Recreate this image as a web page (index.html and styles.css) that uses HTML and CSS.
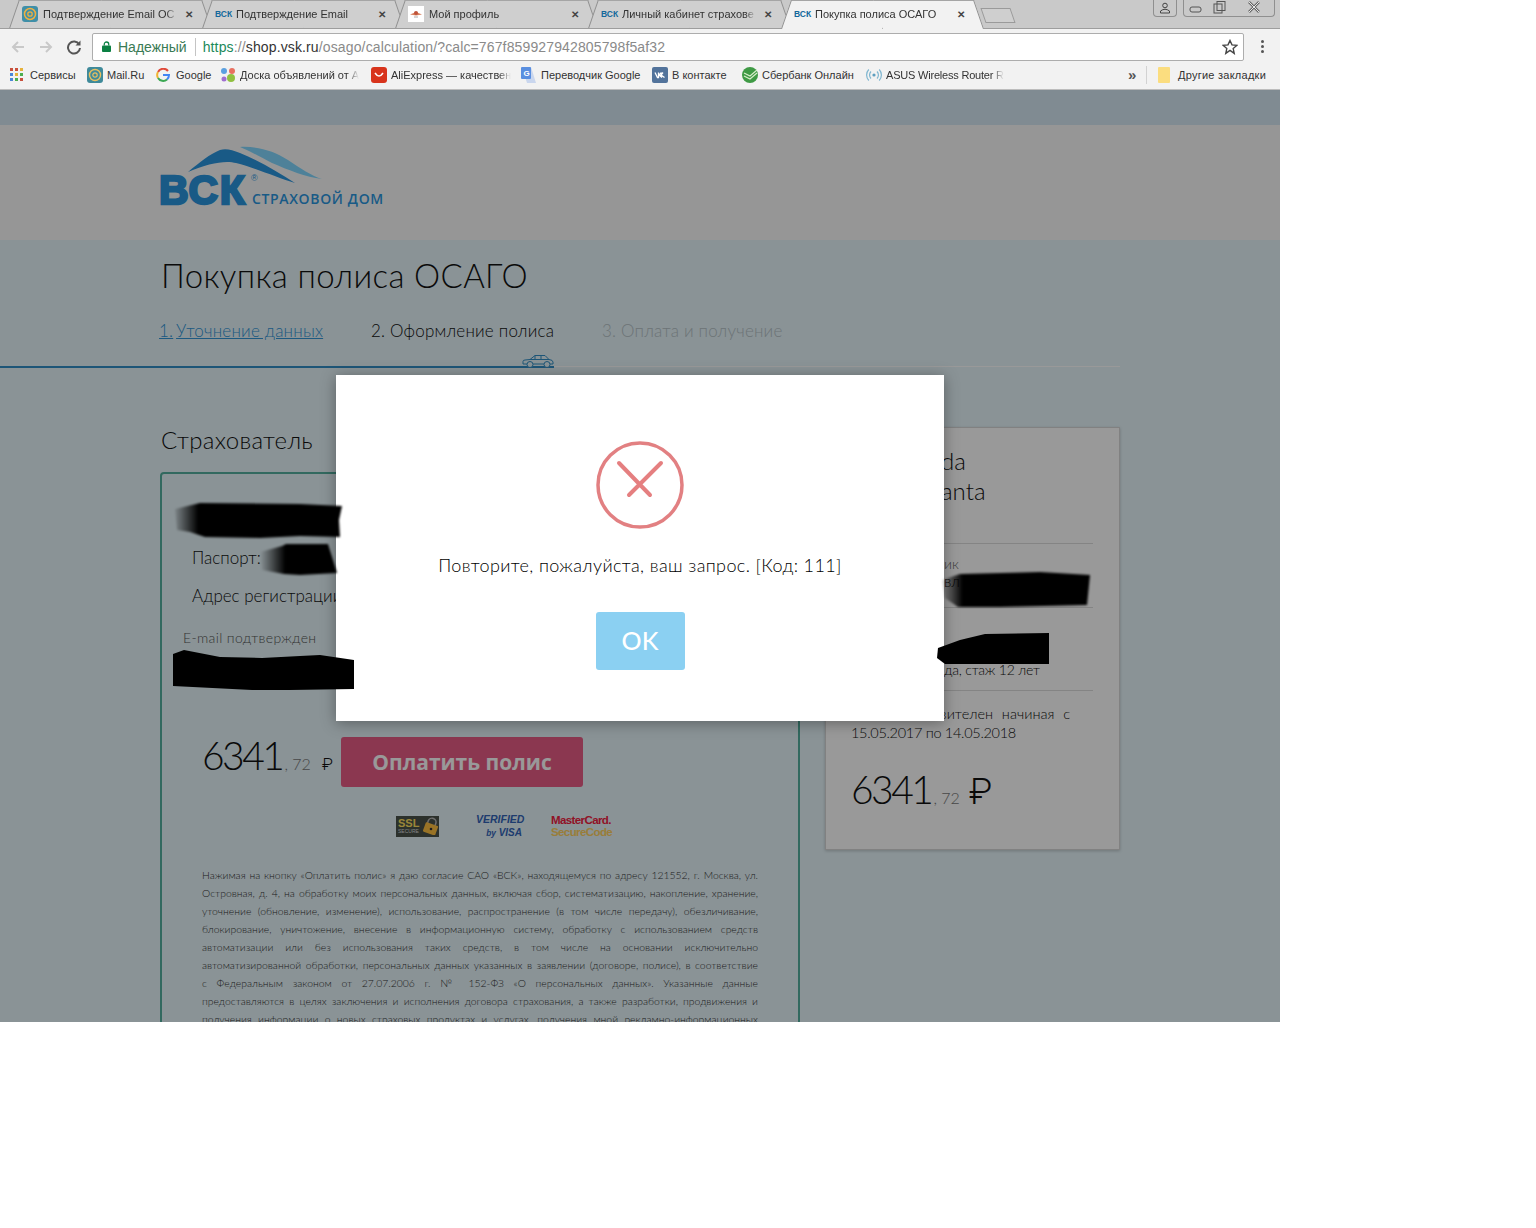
FILE: index.html
```html
<!DOCTYPE html>
<html lang="ru">
	<head>
		<meta charset="UTF-8" />
		<title>Покупка полиса ОСАГО</title>
		<link rel="stylesheet" href="styles.css">
	</head>
	<body>
		<div class="shot">
			<!-- вкладки -->
			<div class="tabbar">
				<div class="tab">
					<svg class="fav" viewBox="0 0 16 16"><rect width="16" height="16" rx="3" fill="#3f8fa8"/><circle cx="8" cy="8" r="5.5" fill="none" stroke="#f0b040" stroke-width="1.5"/><circle cx="8" cy="8" r="2.2" fill="none" stroke="#f0b040" stroke-width="1.3"/></svg>
					<span class="tab-title">Подтверждение Email ОС</span>
					<span class="tab-x">✕</span>
				</div>
				<div class="tab">
					<span class="fav-vsk">ВСК</span>
					<span class="tab-title">Подтверждение Email</span>
					<span class="tab-x">✕</span>
				</div>
				<div class="tab">
					<svg class="fav" viewBox="0 0 16 16"><rect width="16" height="16" fill="#fff"/><path d="M2 8.5 L8 6 L14 8.5 L8 9.5 Z" fill="#d8815f"/><circle cx="8" cy="7" r="2" fill="#c0533a"/><path d="M6 11h4" stroke="#aaa"/></svg>
					<span class="tab-title">Мой профиль</span>
					<span class="tab-x">✕</span>
				</div>
				<div class="tab">
					<span class="fav-vsk">ВСК</span>
					<span class="tab-title">Личный кабинет страхове</span>
					<span class="tab-x">✕</span>
				</div>
				<div class="tab active">
					<span class="fav-vsk">ВСК</span>
					<span class="tab-title">Покупка полиса ОСАГО</span>
					<span class="tab-x">✕</span>
				</div>
				<div class="new-tab"></div>
				<div class="win-btns">
					<div class="win-user">
						<svg viewBox="0 0 12 12" width="12" height="12"><circle cx="6" cy="3.5" r="2.3" fill="none" stroke="#444"/><path d="M1.5 11 V9 Q6 5.5 10.5 9 V11 Z" fill="none" stroke="#444"/></svg>
					</div>
					<div class="win-group">
						<svg viewBox="0 0 92 16" width="92" height="16">
							<rect x="7" y="7" width="11" height="5" rx="2" fill="none" stroke="#555"/>
							<rect x="31" y="4" width="8" height="9" fill="none" stroke="#555"/>
							<rect x="34" y="1.5" width="8" height="9" fill="none" stroke="#555"/>
							<path d="M66 2 L76 12 M76 2 L66 12" stroke="#666" stroke-width="2.5"/>
							<path d="M66 2 L76 12 M76 2 L66 12" stroke="#e6e6e6" stroke-width="1"/>
						</svg>
					</div>
				</div>
			</div>

			<!-- адресная строка -->
			<div class="toolbar">
				<svg class="nav-ico" viewBox="0 0 16 16"><path d="M14 8H3M8 3L3 8l5 5" fill="none" stroke="#c9c9c9" stroke-width="2"/></svg>
				<svg class="nav-ico" viewBox="0 0 16 16"><path d="M2 8h11M8 3l5 5-5 5" fill="none" stroke="#c9c9c9" stroke-width="2"/></svg>
				<svg class="nav-ico" viewBox="0 0 16 16"><path d="M13.2 5.5A6 6 0 1 0 14 9" fill="none" stroke="#555" stroke-width="2"/><path d="M14.5 1.5v5h-5z" fill="#555"/></svg>
				<div class="omnibox">
					<svg class="lock" viewBox="0 0 10 12"><path d="M2.5 5V3.5a2.5 2.5 0 0 1 5 0V5" fill="none" stroke="#0b8043" stroke-width="1.4"/><rect y="5" width="10" height="7" rx="1" fill="#0b8043"/></svg>
					<span class="secure">Надежный</span>
					<span class="omni-sep"></span>
					<span class="url"><span class="url-https">https</span><span class="url-rest">://</span><span class="url-host">shop.vsk.ru</span><span class="url-rest">/osago/calculation/?calc=767f859927942805798f5af32</span></span>
					<svg class="star" viewBox="0 0 16 16"><path d="M8 1.5l2 4.4 4.8.5-3.6 3.2 1 4.7L8 11.4l-4.2 2.9 1-4.7L1.2 6.4 6 5.900z" fill="none" stroke="#444" stroke-width="1.4"/></svg>
				</div>
				<div class="menu-dots"><i></i><i></i><i></i></div>
			</div>

			<!-- закладки -->
			<div class="bookmarks">
				<div class="bm bm-services">
					<svg class="bm-ico small" viewBox="0 0 14 14"><g fill="#c9503c"><rect width="3" height="3"/><rect x="5" width="3" height="3"/></g><rect x="10" width="3" height="3" fill="#e6b23a"/><rect y="5" width="3" height="3" fill="#4a86d8"/><rect x="5" y="5" width="3" height="3" fill="#e6b23a"/><rect x="10" y="5" width="3" height="3" fill="#4caf50"/><rect y="10" width="3" height="3" fill="#4a86d8"/><rect x="5" y="10" width="3" height="3" fill="#4caf50"/><rect x="10" y="10" width="3" height="3" fill="#c9503c"/></svg>
					<span>Сервисы</span>
				</div>
				<div class="bm bm-mail">
					<svg class="bm-ico" viewBox="0 0 16 16"><rect width="16" height="16" rx="3" fill="#3f8a9a"/><circle cx="8" cy="8" r="5.500" fill="none" stroke="#e8c060" stroke-width="1.4"/><circle cx="8" cy="8" r="2.200" fill="none" stroke="#e8c060" stroke-width="1.200"/></svg>
					<span>Mail.Ru</span>
				</div>
				<div class="bm bm-google">
					<svg class="bm-ico small" viewBox="0 0 14 14"><path d="M12 3A6 6 0 0 0 2 4" fill="none" stroke="#e04a3a" stroke-width="2"/><path d="M2 4a6 6 0 0 0 0 6" fill="none" stroke="#f0b430" stroke-width="2"/><path d="M2 10a6 6 0 0 0 9 1.500" fill="none" stroke="#3ca853" stroke-width="2"/><path d="M11 11.500A6 6 0 0 0 13 7H7" fill="none" stroke="#4285f4" stroke-width="2"/></svg>
					<span>Google</span>
				</div>
				<div class="bm bm-avito">
					<svg class="bm-ico" viewBox="0 0 16 16"><circle cx="4" cy="4" r="3" fill="#5aa0e0"/><circle cx="12" cy="4" r="3" fill="#e87060"/><circle cx="4" cy="12" r="2.500" fill="#a070d0"/><circle cx="11" cy="11" r="4" fill="#90c040"/></svg>
					<span class="bm-fade">Доска объявлений от А</span>
				</div>
				<div class="bm bm-ali">
					<svg class="bm-ico" viewBox="0 0 16 16"><rect width="16" height="16" rx="3" fill="#d8341c"/><path d="M4 6q4 6 8 0" fill="none" stroke="#fff" stroke-width="1.500"/></svg>
					<span class="bm-fade">AliExpress — качествен</span>
				</div>
				<div class="bm bm-translate">
					<svg class="bm-ico" viewBox="0 0 16 16"><path d="M1 0h9l5 16H6z" fill="#c9d6ee"/><rect width="10" height="12" rx="1" fill="#5a8fe0"/><text x="2.500" y="9" class="bm-g">G</text></svg>
					<span>Переводчик Google</span>
				</div>
				<div class="bm bm-vk">
					<svg class="bm-ico" viewBox="0 0 16 16"><rect width="16" height="16" rx="2" fill="#52739b"/><path d="M3 5.500l2.500 5h1V5.500M7 8l2.500-2.500M7 8l3 2.500M11 5.500L9 8l3.500 2.500" fill="none" stroke="#fff" stroke-width="1.300"/></svg>
					<span>В контакте</span>
				</div>
				<div class="bm bm-sber">
					<svg class="bm-ico" viewBox="0 0 16 16"><circle cx="8" cy="8" r="8" fill="#3f9a45"/><path d="M2 6l6 3 7-6M2 9l6 3 7-6" fill="none" stroke="#d8eecb" stroke-width="1.200"/></svg>
					<span>Сбербанк Онлайн</span>
				</div>
				<div class="bm bm-asus">
					<svg class="bm-ico" viewBox="0 0 16 16"><circle cx="8" cy="8" r="1.600" fill="#5f9fc0"/><path d="M5 4.500a5 5 0 0 0 0 7M11 4.500a5 5 0 0 1 0 7M2.800 2.500a8 8 0 0 0 0 11M13.200 2.500a8 8 0 0 1 0 11" fill="none" stroke="#7fb6d0" stroke-width="1.200"/></svg>
					<span class="bm-fade">ASUS Wireless Router R</span>
				</div>
				<div class="bm-more">»</div>
				<div class="bm-sep"></div>
				<div class="bm bm-other">
					<svg class="bm-ico" viewBox="0 0 12 16"><rect width="12" height="16" rx="1" fill="#fbdd7f"/></svg>
					<span>Другие закладки</span>
				</div>
			</div>

			<!-- страница -->
			<div class="viewport">
				<div class="top-band"></div>
				<div class="site-head">
					<svg class="logo" viewBox="0 0 224 60" width="224" height="60">
						<path d="M28 24 C40 14 50 6 60 2 C66 0 72 2 80 5 C100 13 118 24 135 35 C118 30 96 20 76 15 C66 12 48 15 28 24 Z" fill="#2b96e0"/>
						<path d="M80 -1 C98 -2 114 3 128 12 C140 20 152 28 162 31 C146 29 128 22 112 15 C100 9 90 3 80 -1 Z" fill="#82d8ff"/>
						<text x="-1" y="56" class="logo-big">ВСК</text>
						<text x="91" y="33" class="logo-reg">®</text>
						<text x="92" y="55.500" class="logo-small">СТРАХОВОЙ ДОМ</text>
					</svg>
				</div>
				<div class="content">
					<h1 class="page-title">Покупка полиса ОСАГО</h1>
					<div class="steps">
						<a class="step step-done"><span class="step-n">1.</span> <span class="step-name">Уточнение данных</span></a>
						<span class="step step-now">2. Оформление полиса</span>
						<span class="step step-next">3. Оплата и получение</span>
					</div>
					<div class="wizard-line">
						<div class="wizard-fill">
							<svg class="car" viewBox="0 0 32 14" width="32" height="14"><path d="M1 10 V7.500 Q1 6 3 6 L8 5.500 L13 1.500 H23 L27 5.500 Q31 6 31 8 V10 Z M13 1.500 V5.500 H8 M19 1.500 V5.500 H13 M19 5.500 H27" fill="none" stroke="#318ec6"/><circle cx="8" cy="10.500" r="3" fill="#e6f5fa" stroke="#318ec6"/><circle cx="25" cy="10.500" r="3" fill="#e6f5fa" stroke="#318ec6"/></svg>
						</div>
					</div>
					<div class="columns">
						<div class="insurer">
							<h2 class="sec-title">Страхователь</h2>
							<div class="insurer-card">
								<div class="person">
									<p class="person-row">Паспорт:</p>
									<p class="person-row">Адрес регистрации</p>
									<p class="email-label">E-mail подтвержден</p>
								</div>
								<div class="pay-row">
									<div class="price"><span class="price-main">6341</span><span class="price-cents">, 72</span><span class="price-cur">₽</span></div>
									<button class="pay-btn">Оплатить полис</button>
								</div>
								<div class="secure-logos">
									<div class="ssl"><span class="ssl-txt"><b>SSL</b><i>SECURE</i></span><svg viewBox="0 0 16 18" width="16" height="18"><path d="M4 8V5a4 4 0 0 1 8 0v3" fill="none" stroke="#bbb" stroke-width="1.500" transform="rotate(20 8 8)"/><rect x="1" y="7" width="13" height="10" rx="1" fill="#ffc040" transform="rotate(20 8 12)"/><circle cx="8" cy="12" r="1.300" fill="#333"/></svg></div>
									<div class="visa"><b>VERIFIED</b><b class="visa-by"><small>by</small> VISA</b></div>
									<div class="mc"><b>MasterCard.</b><b class="mc-sec">SecureCode</b></div>
								</div>
								<div class="legal">
									<span>Нажимая на кнопку «Оплатить полис» я даю согласие САО «ВСК», находящемуся по адресу 121552, г. Москва, ул.</span>
									<span>Островная, д. 4, на обработку моих персональных данных, включая сбор, систематизацию, накопление, хранение,</span>
									<span>уточнение (обновление, изменение), использование, распространение (в том числе передачу), обезличивание,</span>
									<span>блокирование, уничтожение, внесение в информационную систему, обработку с использованием средств</span>
									<span>автоматизации или без использования таких средств, в том числе на основании исключительно</span>
									<span>автоматизированной обработки, персональных данных указанных в заявлении (договоре, полисе), в соответствие</span>
									<span>с Федеральным законом от 27.07.2006 г. № 152-ФЗ «О персональных данных». Указанные данные</span>
									<span>предоставляются в целях заключения и исполнения договора страхования, а также разработки, продвижения и</span>
									<span>получения информации о новых страховых продуктах и услугах, получения мной рекламно-информационных</span>
								</div>
							</div>
						</div>
						<div class="summary">
							<p class="car-line">da</p>
							<p class="car-line">anta</p>
							<div class="sum-block sum-owner">
								<p class="sum-label tail">ик</p>
								<p class="sum-text tail">вл</p>
							</div>
							<div class="sum-block sum-driver">
								<p class="sum-text tail sum-stage">да, стаж 12 лет</p>
							</div>
							<div class="sum-period">
								<p class="sum-text sum-from">Полис действителен начиная с</p>
								<p class="sum-text sum-dates">15.05.2017 по 14.05.2018</p>
							</div>
							<div class="sum-price"><span class="price-main">6341</span><span class="price-cents">, 72</span><span class="sum-cur">₽</span></div>
						</div>
					</div>
				</div>

				<!-- затемнение и окно ошибки -->
				<div class="overlay">
					<div class="modal">
						<svg class="err-ico" viewBox="0 0 88 88" width="88" height="88"><circle cx="44" cy="44" r="42" fill="none" stroke="#e28082" stroke-width="3.500"/><path d="M23 22 L54 54 M65 22 L33 54" fill="none" stroke="#e57f80" stroke-width="4" stroke-linecap="round"/></svg>
						<p class="modal-msg">Повторите, пожалуйста, ваш запрос. [Код: 111]</p>
						<button class="ok-btn">OK</button>
					</div>
				</div>

				<!-- закрашенные данные -->
				<svg class="scribbles" viewBox="0 90 1280 932" width="1280" height="932">
					<defs>
						<filter id="soft"><feGaussianBlur stdDeviation="1.200"/></filter>
						<linearGradient id="fadeL"><stop offset="0" stop-color="#000" stop-opacity="0.1"/><stop offset="0.14" stop-color="#000"/></linearGradient>
						<linearGradient id="fadeB"><stop offset="0" stop-color="#000" stop-opacity="0"/><stop offset="0.33" stop-color="#000"/></linearGradient>
					</defs>
					<path d="M175 509 L200 503 L300 504 L342 506 L339 520 L340 537 L300 536 L260 538 L205 537 L190 532 L177 530 Z" fill="url(#fadeL)" filter="url(#soft)"/>
					<path d="M260 552 L282 546 L286 544 L328 544 L337 573 L300 575 L284 574 L262 570 Z" fill="url(#fadeB)" filter="url(#soft)"/>
					<path d="M173 654 L184 650 L220 657 L262 658 L300 656 L320 655 L354 660 L354 689 L290 690 L252 690 L173 686 Z" fill="#000"/>
					<path d="M942 580 L960 574 L1040 572 L1090 575 L1087 605 L1000 607 L958 607 L945 598 Z" fill="url(#fadeL)" filter="url(#soft)"/>
					<path d="M938 648 L960 640 L985 634 L1049 633 L1049 664 L945 664 L937 658 Z" fill="#000"/>
				</svg>
			</div>
		</div>
	</body>
</html>
```

FILE: styles.css
```css
* {
	margin: 0;
	padding: 0;
	box-sizing: border-box;
}

body {
	background: #fff;
	font-family: "Lato", "Open Sans", sans-serif;
}

.shot {
	width: 1280px;
	height: 1022px;
	overflow: hidden;
	display: flex;
	flex-direction: column;
}

/* браузер */
.tabbar {
	height: 29px;
	flex: none;
	display: flex;
	padding-left: 14px;
	background: #c9c9c9;
	border-bottom: 1px solid #9d9d9d;
	font-family: "Liberation Sans", sans-serif;
}

.tab {
	position: relative;
	width: 193px;
	height: 28px;
	flex: none;
	display: flex;
	align-items: center;
	padding: 0 10px 0 8px;
	font-size: 11px;
	color: #333;
}

.tab::before,
.tab::after {
	content: "";
	position: absolute;
	top: 0;
	bottom: 0;
	width: 52%;
	background: #cfcfcf;
	border-top: 1px solid #a5a5a5;
	z-index: 0;
}

.tab::before {
	left: 0;
	border-left: 1px solid #8f8f8f;
	transform: skewX(-19deg);
}

.tab::after {
	right: 0;
	border-right: 1px solid #8f8f8f;
	transform: skewX(19deg);
}

.tab.active {
	z-index: 2;
}

.tab.active::before,
.tab.active::after {
	bottom: -1px;
	background: #f2f2f2;
}

.tab > * {
	position: relative;
	z-index: 1;
}

.fav {
	width: 16px;
	height: 16px;
	flex: none;
}

.fav-vsk {
	width: 16px;
	flex: none;
	font-size: 8.500px;
	font-weight: bold;
	color: #14689c;
}

.tab-title {
	flex: 1;
	min-width: 0;
	margin-left: 5px;
	white-space: nowrap;
	mask-image: linear-gradient(to right, #000 92%, transparent);
}

.tab-x {
	width: 12px;
	flex: none;
	margin-left: 8px;
	font-size: 10px;
	font-weight: bold;
	color: #444;
}

.new-tab {
	width: 30px;
	height: 15px;
	margin: 8px 0 0 4px;
	border: 1px solid #9a9a9a;
	background: #cfcfcf;
	transform: skewX(19deg);
}

.win-btns {
	margin-left: auto;
	margin-right: 5px;
	display: flex;
	gap: 6px;
	align-items: flex-start;
}

.win-user {
	width: 24px;
	height: 17px;
	border: 1px solid #8f8f8f;
	border-top: 0;
	border-radius: 0 0 4px 4px;
	display: flex;
	align-items: center;
	justify-content: center;
}

.win-group {
	width: 92px;
	height: 17px;
	border: 1px solid #8f8f8f;
	border-top: 0;
	border-radius: 0 0 4px 4px;
}

.win-group svg {
	display: block;
	margin-left: -1px;
}

.toolbar {
	height: 33px;
	flex: none;
	display: flex;
	align-items: center;
	padding: 2px 0 0 10px;
	background: #f2f2f2;
	font-family: "Liberation Sans", sans-serif;
}

.nav-ico {
	width: 16px;
	height: 16px;
	margin-right: 12px;
	flex: none;
}

.omnibox {
	width: 1152px;
	height: 28px;
	margin-left: -2px;
	padding: 0 5px 0 9px;
	flex: none;
	display: flex;
	align-items: center;
	background: #fff;
	border: 1px solid #adadad;
	border-radius: 2px;
}

.lock {
	width: 9px;
	height: 11px;
	flex: none;
}

.secure {
	margin-left: 7px;
	font-size: 14px;
	color: #3a7a54;
}

.omni-sep {
	width: 1px;
	height: 18px;
	margin: 0 7px 0 8px;
	background: #c4c4c4;
}

.url {
	flex: 1;
	font-size: 14px;
	letter-spacing: 0.130px;
	white-space: nowrap;
}

.url-https {
	color: #1b8a5a;
}

.url-rest {
	color: #8a8a8a;
}

.url-host {
	color: #333;
}

.star {
	width: 16px;
	height: 16px;
	flex: none;
}

.menu-dots {
	display: flex;
	flex-direction: column;
	gap: 2px;
	margin-left: 17px;
}

.menu-dots i {
	width: 3px;
	height: 3px;
	background: #555;
	border-radius: 50%;
}

.bookmarks {
	height: 28px;
	flex: none;
	display: flex;
	align-items: center;
	padding: 0 0 2px 10px;
	background: #f2f2f2;
	border-bottom: 1px solid #bdbdbd;
	font-family: "Liberation Sans", sans-serif;
	font-size: 11px;
	color: #333;
}

.bm {
	display: flex;
	align-items: center;
	flex: none;
}

.bm-ico {
	width: 16px;
	height: 16px;
	margin-right: 4px;
	flex: none;
}

.bm-ico.small {
	width: 14px;
	height: 14px;
	margin-right: 6px;
}

.bm-g {
	font-size: 8px;
	font-weight: bold;
	fill: #fff;
}

.bm-fade {
	display: block;
	white-space: nowrap;
	mask-image: linear-gradient(to right, #000 90%, transparent);
}

.bm-services { width: 77px; }
.bm-mail { width: 69px; }
.bm-google { width: 64px; }
.bm-avito { width: 151px; }
.bm-ali { width: 150px; }
.bm-translate { width: 131px; }
.bm-vk { width: 90px; }
.bm-sber { width: 124px; }
.bm-asus { width: 262px; letter-spacing: -0.200px; }

.bm-more {
	width: 18px;
	font-size: 15px;
	font-weight: bold;
	color: #555;
	line-height: 1;
}

.bm-sep {
	width: 1px;
	height: 18px;
	margin: 0 11px 0 0;
	background: #d2d2d2;
}

.bm-other {
	letter-spacing: 0.250px;
}

.bm-other .bm-ico {
	width: 12px;
	margin-right: 8px;
}

/* страница */
.viewport {
	position: relative;
	flex: 1;
	min-height: 0;
	overflow: hidden;
	background: #e6f5fa;
}

.top-band {
	height: 35px;
	background: #d5e8f3;
}

.site-head {
	height: 115px;
	padding: 23px 0 0 160px;
	background: #fbfbfb;
}

.logo {
	display: block;
	overflow: visible;
}

.logo-big {
	font-family: "Liberation Sans", sans-serif;
	font-size: 41px;
	font-weight: bold;
	letter-spacing: 1.500px;
	fill: #2b96e0;
	stroke: #2b96e0;
	stroke-width: 2.500;
}

.logo-reg {
	font-family: "Liberation Sans", sans-serif;
	font-size: 9px;
	fill: #2b96e0;
}

.logo-small {
	font-family: "Open Sans", sans-serif;
	font-size: 14px;
	font-weight: 600;
	letter-spacing: 0.650px;
	fill: #2b96e0;
}

.content {
	padding-top: 14px;
	color: #111;
}

.page-title {
	margin-left: 161px;
	font-size: 33px;
	font-weight: 300;
	letter-spacing: 0.350px;
	line-height: 42px;
}

.steps {
	display: flex;
	margin: 24px 0 0 160px;
	font-size: 17px;
	font-weight: 300;
	letter-spacing: 0.200px;
	line-height: 22px;
}

.step-done {
	color: #3296d8;
	width: 211px;
}

.step-done span {
	text-decoration: underline;
}

.step-n {
	margin-left: -1px;
}

.step-name {
	margin-left: -2px;
}

.step-now {
	width: 231px;
}

.step-next {
	color: #b5c2c7;
}

.wizard-line {
	width: 1120px;
	height: 1px;
	margin-top: 24px;
	background: #fff;
}

.wizard-fill {
	position: relative;
	width: 554px;
	height: 2px;
	background: #318ec6;
}

.car {
	position: absolute;
	right: 0;
	bottom: 0;
}

.columns {
	display: flex;
	margin: 58px 0 0 160px;
}

.insurer {
	width: 640px;
	flex: none;
}

.sec-title {
	margin-left: 1px;
	font-size: 24px;
	font-weight: 300;
	letter-spacing: 0.300px;
	line-height: 30px;
}

.insurer-card {
	height: 600px;
	margin-top: 17px;
	border: 2px solid #54af9e;
	border-radius: 4px;
	padding: 73px 40px 0 40px;
}

.person-row {
	margin: 0 0 16px -10px;
	font-size: 17px;
	font-weight: 300;
	line-height: 22px;
}

.email-label {
	margin: 22px 0 0 -19px;
	font-size: 14px;
	font-weight: 300;
	letter-spacing: 0.350px;
	color: #555;
}

.pay-row {
	display: flex;
	align-items: flex-start;
	margin-top: 91px;
}

.price {
	width: 139px;
	margin-top: -5px;
	flex: none;
	white-space: nowrap;
}

.price-main {
	font-size: 39px;
	font-weight: 300;
	letter-spacing: -2.500px;
}

.price-cents {
	margin-left: 2px;
	font-size: 16px;
	font-weight: 300;
	color: #777;
}

.price-cur {
	margin-left: 11px;
	font-family: "Roboto", sans-serif;
	font-size: 17px;
	font-weight: 300;
}

.pay-btn {
	width: 242px;
	height: 50px;
	border: 0;
	border-radius: 3px;
	background: #e85c85;
	color: #fff;
	font-family: "Open Sans", sans-serif;
	font-size: 21px;
	font-weight: 700;
}

.secure-logos {
	display: flex;
	align-items: center;
	margin: 25px 0 0 194px;
	height: 28px;
}

.ssl {
	position: relative;
	width: 43px;
	height: 21px;
	flex: none;
	display: flex;
	align-items: center;
	justify-content: space-between;
	background: #4a524a;
	color: #ffe060;
	font-family: "Liberation Sans", sans-serif;
	line-height: 1;
}

.ssl-txt {
	display: flex;
	flex-direction: column;
	padding-left: 2px;
}

.ssl-txt b {
	font-size: 11px;
}

.ssl-txt i {
	font-style: normal;
	font-size: 5px;
	color: #ddd;
}

.visa {
	width: 46px;
	margin-left: 37px;
	flex: none;
	color: #3264b8;
	font-family: "Liberation Sans", sans-serif;
	font-size: 10.500px;
	font-style: italic;
	line-height: 13px;
	text-align: right;
}

.visa b {
	display: block;
}

.visa-by {
	font-size: 10px;
}

.mc {
	margin-left: 29px;
	flex: none;
	color: #f02040;
	font-family: "Liberation Sans", sans-serif;
	font-size: 11.500px;
	line-height: 12px;
	letter-spacing: -0.600px;
}

.mc b {
	display: block;
}

.mc-sec {
	color: #ffd060;
}

.legal {
	margin-top: 26px;
	font-size: 10.400px;
	font-weight: 300;
	line-height: 18px;
	color: #333;
}

.legal span {
	display: block;
	width: 556px;
	text-align: justify;
	text-align-last: justify;
}

.summary {
	width: 295px;
	height: 423px;
	margin: 2px 0 0 25px;
	flex: none;
	padding: 18px 26px 0 25px;
	background: #ffffff;
	border: 1px solid #d8d8d8;
	box-shadow: 0 1px 3px rgba(0, 0, 0, 0.2);
}

.car-line {
	padding-left: 90px;
	font-size: 24px;
	font-weight: 300;
	line-height: 30px;
}

.tail {
	padding-left: 93px;
}

.sum-block {
	border-top: 1px solid #dcdcdc;
}

.sum-owner {
	height: 64px;
	margin-top: 37px;
	padding-top: 11px;
}

.sum-driver {
	height: 84px;
	padding-top: 52px;
	border-bottom: 1px solid #dcdcdc;
}

.sum-label {
	font-size: 14px;
	font-weight: 300;
	color: #666;
}

.sum-text {
	font-size: 15px;
	font-weight: 300;
	line-height: 19px;
}

.sum-stage {
	font-size: 14px;
	letter-spacing: -0.200px;
}

.sum-period {
	margin-top: 13px;
}

.sum-from {
	width: 219px;
	text-align: justify;
	text-align-last: justify;
	font-size: 14.500px;
}

.sum-dates {
	font-size: 14.500px;
	letter-spacing: -0.300px;
}

.sum-price {
	margin-top: 24px;
	white-space: nowrap;
}

.sum-cur {
	margin-left: 9px;
	font-family: "Roboto", sans-serif;
	font-size: 36px;
	font-weight: 300;
}

/* окно ошибки */
.overlay {
	position: absolute;
	inset: 0;
	display: flex;
	justify-content: center;
	padding-top: 285px;
	background: rgba(0, 0, 0, 0.4);
}

.modal {
	width: 608px;
	height: 346px;
	display: flex;
	flex-direction: column;
	align-items: center;
	padding-top: 66px;
	background: #fff;
	box-shadow: 0 2px 14px rgba(0, 0, 0, 0.35);
}

.err-ico {
	flex: none;
}

.modal-msg {
	margin-top: 24px;
	font-size: 18px;
	font-weight: 300;
	letter-spacing: 0.380px;
	line-height: 24px;
	color: #000;
}

.ok-btn {
	width: 89px;
	height: 58px;
	margin-top: 35px;
	padding-bottom: 3px;
	border: 0;
	border-radius: 3px;
	background: #8bd0f2;
	color: #fff;
	font-family: "Lato", sans-serif;
	font-size: 25px;
	font-weight: 500;
}

.scribbles {
	position: absolute;
	left: 0;
	top: 0;
}
```
